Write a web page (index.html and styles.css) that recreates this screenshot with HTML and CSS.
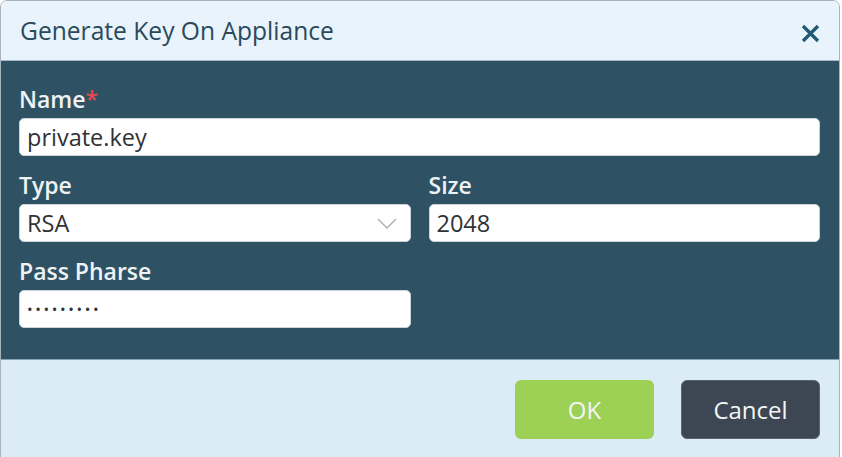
FILE: index.html
```html
<!DOCTYPE html>
<html>
<head>
<meta charset="utf-8">
<link rel="stylesheet" href="styles.css">
</head>
<body>
<div class="dialog">
  <div class="header">
    <div class="title">Generate Key On Appliance</div>
    <button class="close" aria-label="Close">
      <svg width="19" height="19" viewBox="0 0 19 19"><path d="M2 2 L17 17 M17 2 L2 17" stroke="#1f5a73" stroke-width="3.2" fill="none"/></svg>
    </button>
  </div>
  <div class="body">
    <div class="field">
      <label class="label">Name<span class="req">*</span></label>
      <input class="input" value="private.key">
    </div>
    <div class="row">
      <div class="field">
        <label class="label">Type</label>
        <div class="input select">RSA
          <svg class="chev" width="20" height="11" viewBox="0 0 20 11"><path d="M1 1 L10 10 L19 1" stroke="#a8adb2" stroke-width="1.3" fill="none"/></svg>
        </div>
      </div>
      <div class="field">
        <label class="label">Size</label>
        <input class="input" value="2048">
      </div>
    </div>
    <div class="row">
      <div class="field">
        <label class="label">Pass Pharse</label>
        <input class="input pass" type="password" value="123456789">
      </div>
      <div></div>
    </div>
  </div>
  <div class="footer">
    <button class="btn ok">OK</button>
    <button class="btn cancel">Cancel</button>
  </div>
</div>
</body>
</html>
```

FILE: styles.css
```css
* { box-sizing: border-box; }
html, body { margin: 0; padding: 0; background: #ffffff; overflow: hidden; }
body { font-family: "Open Sans", "Liberation Sans", sans-serif; }
.dialog {
  width: 840px;
  height: 470px;
  border: 1px solid #a9b3ba;
  border-radius: 7px;
  overflow: hidden;
  display: flex;
  flex-direction: column;
}
.header {
  height: 60px;
  background: #e8f3fc;
  border-bottom: 1px solid #a7bcc8;
  display: flex;
  align-items: center;
  justify-content: space-between;
  padding: 0 19px 0 19px;
}
.title {
  font-size: 24.6px;
  color: #2a4a5b;
  padding-bottom: 1px;
}
.close {
  background: none;
  border: 0;
  padding: 0;
  width: 19px;
  height: 19px;
  margin-top: 6px;
  display: flex;
}
.body {
  background: #2e5264;
  padding: 24px 19px 31px 18px;
  display: flex;
  flex-direction: column;
  gap: 15px;
  border-bottom: 1px solid #8aa3b1;
}
.row {
  display: grid;
  grid-template-columns: 1fr 1fr;
  gap: 18px;
}
.field { display: flex; flex-direction: column; gap: 5px; }
.label {
  font-size: 23px;
  line-height: 28px;
  font-weight: 600;
  color: #eef2f4;
}
.req { color: #e2494f; }
.input {
  height: 38px;
  border: 1px solid #c9d3d9;
  border-radius: 5px;
  background: #ffffff;
  font-family: "Open Sans", "Liberation Sans", sans-serif;
  font-size: 23.5px;
  color: #2f3336;
  padding: 0 7px;
  width: 100%;
  outline: none;
}
.select {
  display: flex;
  align-items: center;
  justify-content: space-between;
  padding-right: 13px;
}
.pass { font-size: 15px; letter-spacing: 2.6px; }
.footer {
  flex: 1;
  background: #dbecf6;
  display: flex;
  justify-content: flex-end;
  align-items: flex-start;
  gap: 27px;
  padding: 20px 19px 0 0;
}
.btn {
  width: 139px;
  height: 59px;
  border: 0;
  border-radius: 6px;
  font-family: "Open Sans", "Liberation Sans", sans-serif;
  font-size: 24px;
  color: #f2f5f7;
}
.ok { background: #9dd155; }
.cancel { background: #3d4753; border: 1px solid #5a646e; }
```
